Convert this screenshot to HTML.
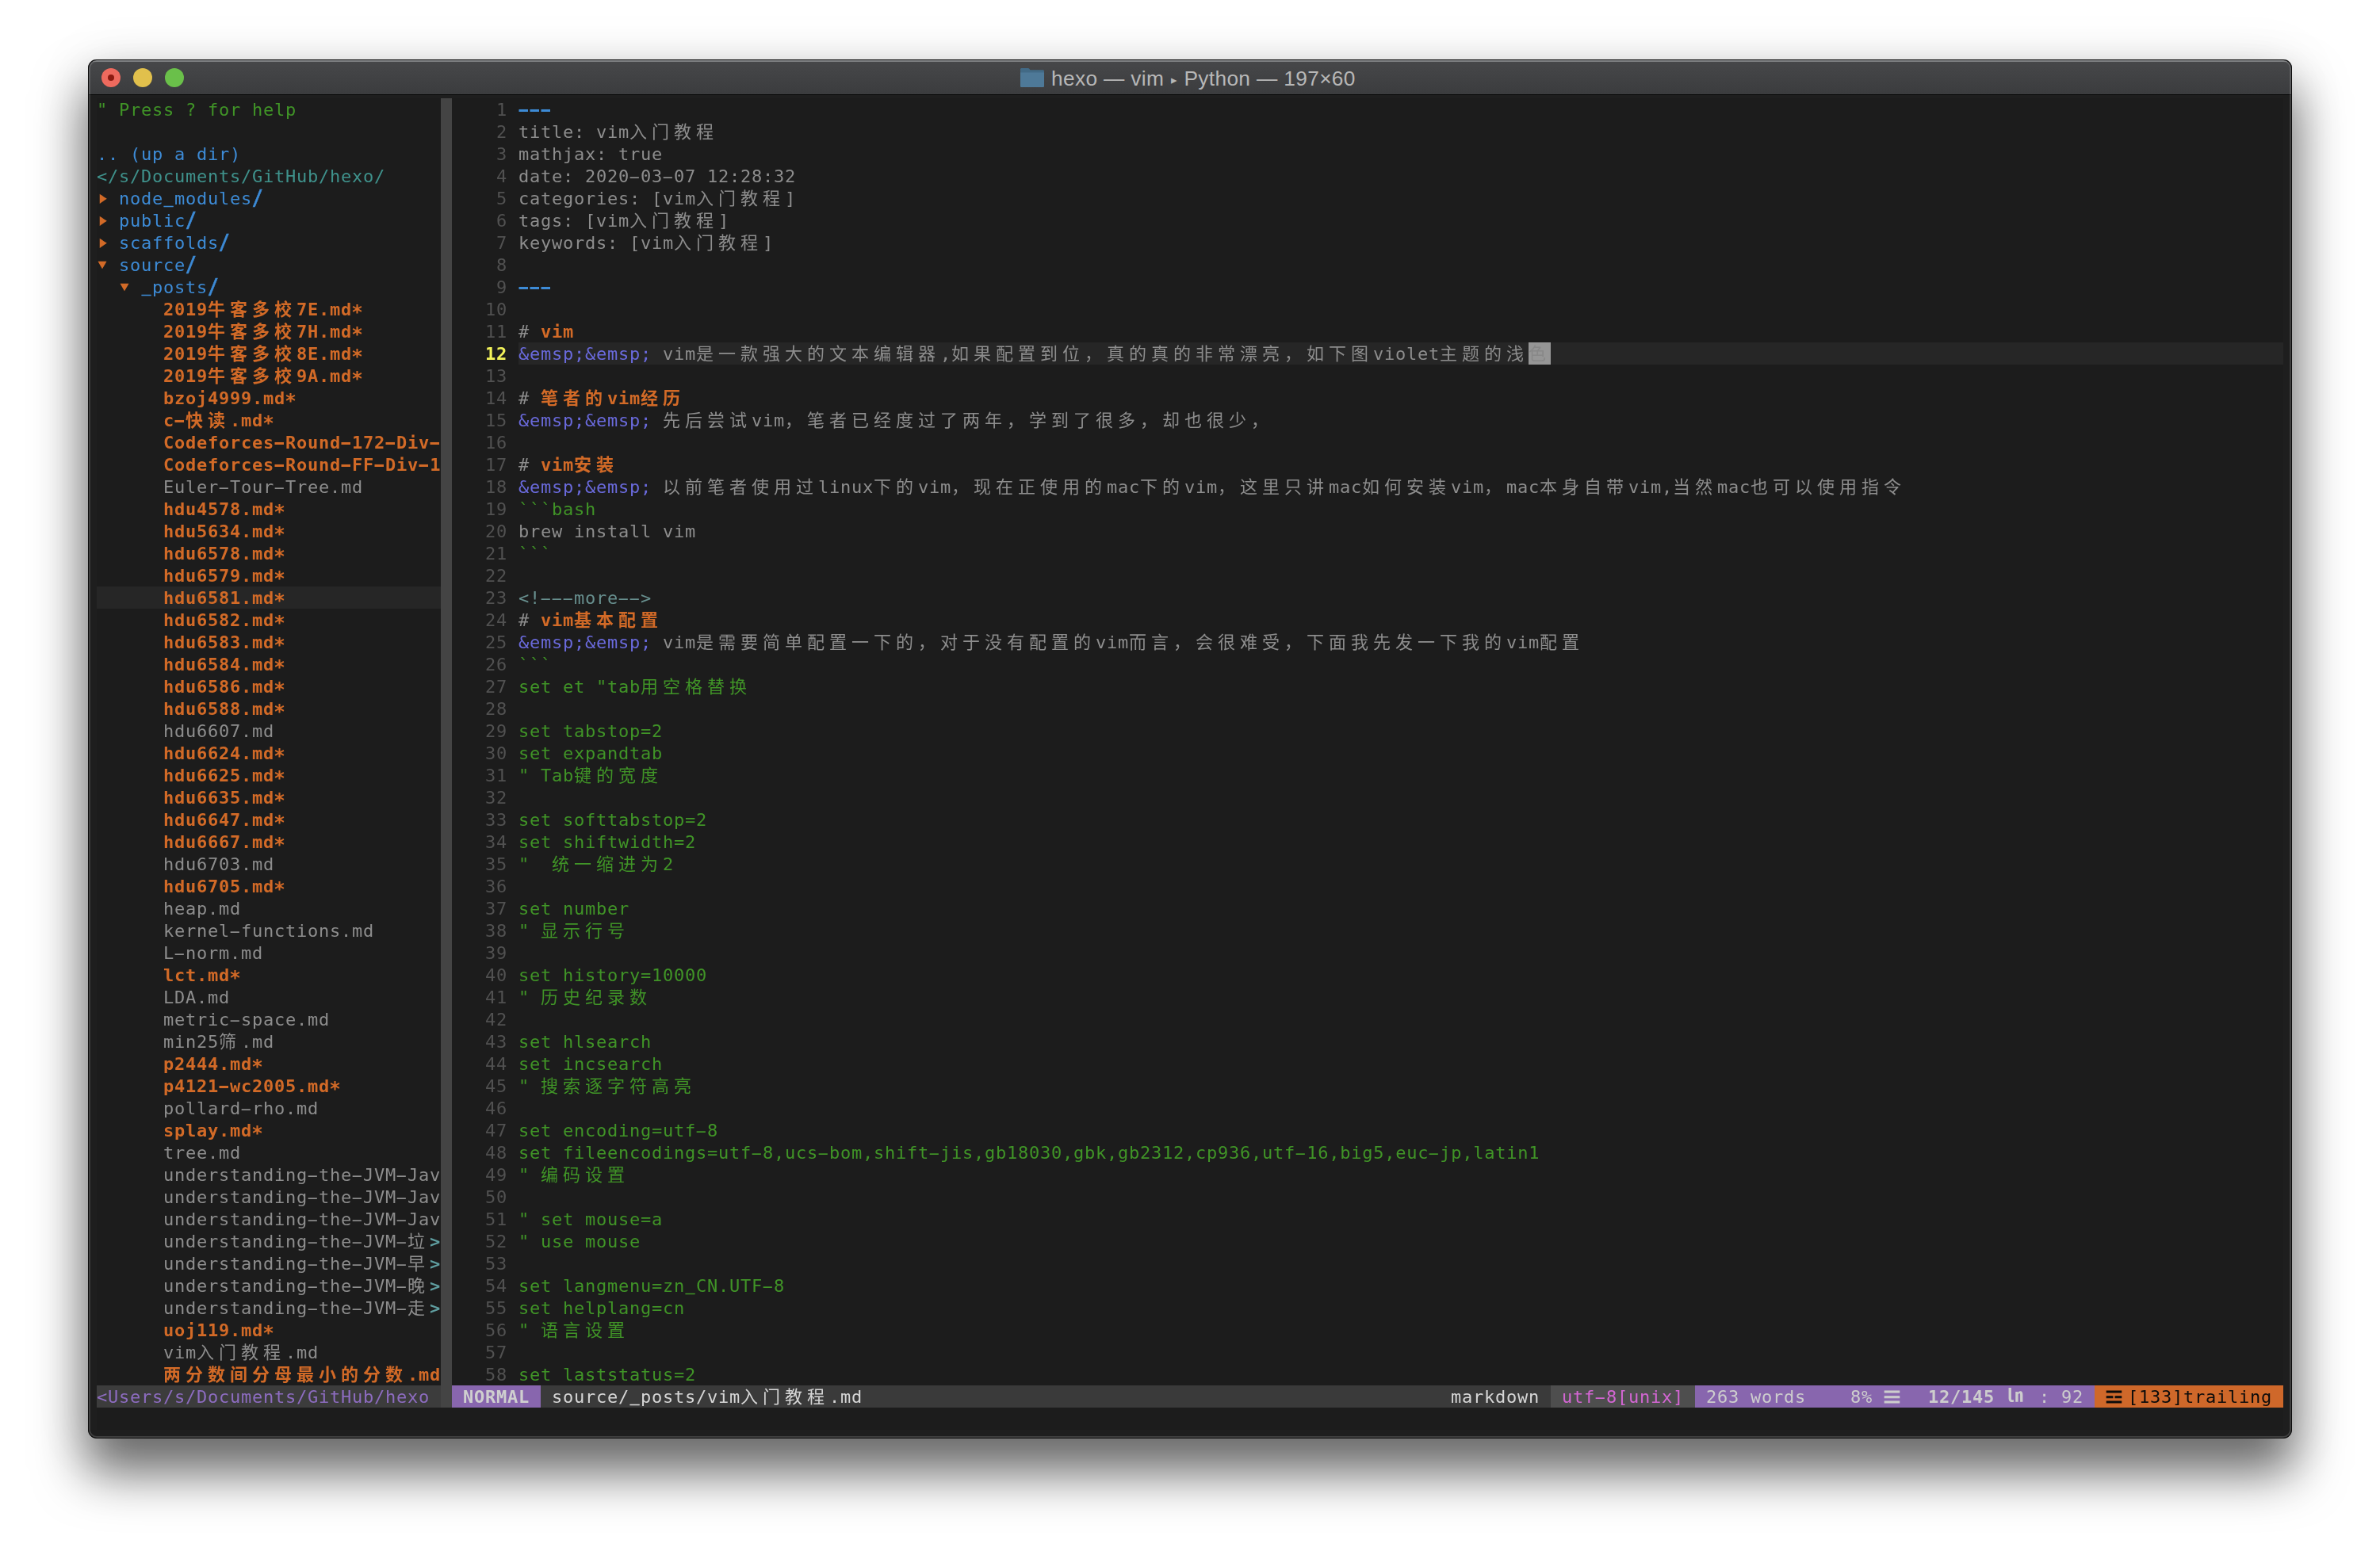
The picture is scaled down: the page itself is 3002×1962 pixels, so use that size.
<!DOCTYPE html>
<html lang="zh"><head><meta charset="utf-8"><title>hexo — vim ▸ Python — 197×60</title>
<style>
html,body{margin:0;padding:0}
body{width:3002px;height:1962px;background:#fff;position:relative;overflow:hidden}
#win{position:absolute;left:111px;top:75px;width:2780px;height:1740px;border-radius:11px;background:#1e1e1e;
 box-shadow:0 40px 63px 4px rgba(0,0,0,.57),0 6px 70px 4px rgba(0,0,0,.08);overflow:hidden}
#tb{position:absolute;left:0;top:0;right:0;height:44px;background:linear-gradient(#47484a,#3b3c3e);border-bottom:1px solid #050505;box-shadow:inset 0 3px 0 #6c6e70}
#edge{position:absolute;left:0;top:0;right:0;bottom:0;border-radius:11px;box-shadow:inset 0 0 0 1px #0a0a0a,inset 0 0 0 3px rgba(255,255,255,.15);pointer-events:none}
.tl{position:absolute;top:11px;width:24px;height:24px;border-radius:50%}
#ttl{position:absolute;top:0;left:1215px;height:44px;font-family:"Liberation Sans",sans-serif;font-size:26.3px;line-height:48px;letter-spacing:.34px;color:#b7b7b7;white-space:pre}
#ttl span{font-family:"DejaVu Sans",sans-serif;font-size:15px;position:relative;top:-2px;margin:0 1px}
#grid{will-change:transform;background:#1c1c1c;position:absolute;left:11px;top:49px;width:2758px;height:1680px}
.t{position:absolute;margin-top:1px;height:28px;line-height:28px;white-space:pre;font-family:"DejaVu Sans Mono","Liberation Mono","Noto Sans CJK SC",monospace;font-size:22px;letter-spacing:0.755px}
.k{margin-top:-2px;font-family:"Noto Sans CJK SC","DejaVu Sans Mono",sans-serif;letter-spacing:0;width:28px;font-size:22px}
.b{position:absolute;height:28px;display:block}
.bd{font-weight:bold}
.hy,.as,.us{font-style:normal;display:inline-block}.us{transform:translateY(-2px) scaleX(.88);-webkit-text-stroke:.6px currentColor}.hy{transform:scaleX(2)}.bd .hy{transform:scaleX(1.7)}.as{transform:translateY(3px) scale(1.1)}
.sl{transform:scale(1.05,1.18);-webkit-text-stroke:.5px currentColor}
.grn{color:#409427}.blu{color:#3d8bd6}.teal{color:#3f928c}.org{color:#d26a27}.gry{color:#8d8d8d}
.ntx{color:#5f9ea0}.pur{color:#6a6adc}.cmt{color:#68908f}.lnr{color:#515151}.cln{color:#f2f25a}
.cul{background:#262626}.vsp{background:#444}.cur{background:#969696}.curt{color:#888}
.st0{background:#3c3c3c}.st1{background:#3a3a3a}.st2{background:#4e4e4e}.stn{background:#8866ae}.sto{background:#cf682a}
.stp{color:#8d6cc0}.stnt{color:#cfcfcf}.stw{color:#d6d6d6}.stm{color:#d366d3}.stl{color:#cdcdcd}.stk{color:#0c0c0c}
.sym{font-family:"DejaVu Sans",sans-serif;letter-spacing:0;font-size:25px;margin-left:-1px;transform:scaleY(.82);-webkit-text-stroke:1.3px currentColor}
.ln{font-family:"Noto Sans CJK SC",sans-serif;letter-spacing:0;font-size:22px;margin-top:-4px;margin-left:1px}
.arr{font-size:27px;letter-spacing:0;margin-top:-1px;transform:scale(.86,1.16);transform-origin:50% 50%}
.ard{transform:scale(1.05,.92);margin-left:-1.5px}
</style></head>
<body>
<div id="win">
<div id="tb">
<i class="tl" style="left:17px;background:#ee6a5e"></i><i class="tl" style="width:8px;height:8px;top:19px;left:25px;background:#8c1a10"></i>
<i class="tl" style="left:57px;background:#e1c04c"></i>
<i class="tl" style="left:97px;background:#6ac04a"></i>
<svg style="position:absolute;left:1176px;top:11px" width="30" height="24" viewBox="0 0 30 24"><path d="M1.5 0h8.2c.8 0 1.3.3 1.8.9l1 1.3h16c.8 0 1.5.7 1.5 1.5V22.5c0 .8-.7 1.5-1.5 1.5H1.5C.7 24 0 23.300 0 22.500V1.500C0 .7.7 0 1.500 0z" fill="#426a86"/><path d="M0 5.500h30V22.500c0 .8-.7 1.500-1.500 1.500H1.500C.7 24 0 23.300 0 22.500z" fill="#4e7998"/></svg>
<div id="ttl">hexo — vim <span>▸</span> Python — 197×60</div>
</div>
<div id="grid">
<span class="t grn" style="left:0px;top:0px">&quot; Press ? for help</span>
<span class="t blu" style="left:0px;top:56px">.. (up a dir)</span>
<span class="t teal" style="left:0px;top:84px">&lt;/s/Documents/GitHub/hexo/</span>
<span class="t org arr" style="left:0px;top:112px">▸</span>
<span class="t blu" style="left:28px;top:112px">node<i class="us">_</i>modules</span>
<span class="t blu bd sl" style="left:196px;top:112px">/</span>
<span class="t org arr" style="left:0px;top:140px">▸</span>
<span class="t blu" style="left:28px;top:140px">public</span>
<span class="t blu bd sl" style="left:112px;top:140px">/</span>
<span class="t org arr" style="left:0px;top:168px">▸</span>
<span class="t blu" style="left:28px;top:168px">scaffolds</span>
<span class="t blu bd sl" style="left:154px;top:168px">/</span>
<span class="t org arr ard" style="left:0px;top:196px">▾</span>
<span class="t blu" style="left:28px;top:196px">source</span>
<span class="t blu bd sl" style="left:112px;top:196px">/</span>
<span class="t org arr ard" style="left:28px;top:224px">▾</span>
<span class="t blu" style="left:56px;top:224px"><i class="us">_</i>posts</span>
<span class="t blu bd sl" style="left:140px;top:224px">/</span>
<span class="t org bd" style="left:84px;top:252px">2019</span>
<span class="t k org bd" style="left:140px;top:252px">牛</span>
<span class="t k org bd" style="left:168px;top:252px">客</span>
<span class="t k org bd" style="left:196px;top:252px">多</span>
<span class="t k org bd" style="left:224px;top:252px">校</span>
<span class="t org bd" style="left:252px;top:252px">7E.md<i class="as">*</i></span>
<span class="t org bd" style="left:84px;top:280px">2019</span>
<span class="t k org bd" style="left:140px;top:280px">牛</span>
<span class="t k org bd" style="left:168px;top:280px">客</span>
<span class="t k org bd" style="left:196px;top:280px">多</span>
<span class="t k org bd" style="left:224px;top:280px">校</span>
<span class="t org bd" style="left:252px;top:280px">7H.md<i class="as">*</i></span>
<span class="t org bd" style="left:84px;top:308px">2019</span>
<span class="t k org bd" style="left:140px;top:308px">牛</span>
<span class="t k org bd" style="left:168px;top:308px">客</span>
<span class="t k org bd" style="left:196px;top:308px">多</span>
<span class="t k org bd" style="left:224px;top:308px">校</span>
<span class="t org bd" style="left:252px;top:308px">8E.md<i class="as">*</i></span>
<span class="t org bd" style="left:84px;top:336px">2019</span>
<span class="t k org bd" style="left:140px;top:336px">牛</span>
<span class="t k org bd" style="left:168px;top:336px">客</span>
<span class="t k org bd" style="left:196px;top:336px">多</span>
<span class="t k org bd" style="left:224px;top:336px">校</span>
<span class="t org bd" style="left:252px;top:336px">9A.md<i class="as">*</i></span>
<span class="t org bd" style="left:84px;top:364px">bzoj4999.md<i class="as">*</i></span>
<span class="t org bd" style="left:84px;top:392px">c<i class="hy">-</i></span>
<span class="t k org bd" style="left:112px;top:392px">快</span>
<span class="t k org bd" style="left:140px;top:392px">读</span>
<span class="t org bd" style="left:168px;top:392px">.md<i class="as">*</i></span>
<span class="t org bd" style="left:84px;top:420px">Codeforces<i class="hy">-</i>Round<i class="hy">-</i>172<i class="hy">-</i>Div<i class="hy">-</i></span>
<span class="t org bd" style="left:84px;top:448px">Codeforces<i class="hy">-</i>Round<i class="hy">-</i>FF<i class="hy">-</i>Div<i class="hy">-</i>1</span>
<span class="t gry" style="left:84px;top:476px">Euler<i class="hy">-</i>Tour<i class="hy">-</i>Tree.md</span>
<span class="t org bd" style="left:84px;top:504px">hdu4578.md<i class="as">*</i></span>
<span class="t org bd" style="left:84px;top:532px">hdu5634.md<i class="as">*</i></span>
<span class="t org bd" style="left:84px;top:560px">hdu6578.md<i class="as">*</i></span>
<span class="t org bd" style="left:84px;top:588px">hdu6579.md<i class="as">*</i></span>
<i class="b cul" style="left:0px;top:616px;width:434px"></i>
<span class="t org bd" style="left:84px;top:616px">hdu6581.md<i class="as">*</i></span>
<span class="t org bd" style="left:84px;top:644px">hdu6582.md<i class="as">*</i></span>
<span class="t org bd" style="left:84px;top:672px">hdu6583.md<i class="as">*</i></span>
<span class="t org bd" style="left:84px;top:700px">hdu6584.md<i class="as">*</i></span>
<span class="t org bd" style="left:84px;top:728px">hdu6586.md<i class="as">*</i></span>
<span class="t org bd" style="left:84px;top:756px">hdu6588.md<i class="as">*</i></span>
<span class="t gry" style="left:84px;top:784px">hdu6607.md</span>
<span class="t org bd" style="left:84px;top:812px">hdu6624.md<i class="as">*</i></span>
<span class="t org bd" style="left:84px;top:840px">hdu6625.md<i class="as">*</i></span>
<span class="t org bd" style="left:84px;top:868px">hdu6635.md<i class="as">*</i></span>
<span class="t org bd" style="left:84px;top:896px">hdu6647.md<i class="as">*</i></span>
<span class="t org bd" style="left:84px;top:924px">hdu6667.md<i class="as">*</i></span>
<span class="t gry" style="left:84px;top:952px">hdu6703.md</span>
<span class="t org bd" style="left:84px;top:980px">hdu6705.md<i class="as">*</i></span>
<span class="t gry" style="left:84px;top:1008px">heap.md</span>
<span class="t gry" style="left:84px;top:1036px">kernel<i class="hy">-</i>functions.md</span>
<span class="t gry" style="left:84px;top:1064px">L<i class="hy">-</i>norm.md</span>
<span class="t org bd" style="left:84px;top:1092px">lct.md<i class="as">*</i></span>
<span class="t gry" style="left:84px;top:1120px">LDA.md</span>
<span class="t gry" style="left:84px;top:1148px">metric<i class="hy">-</i>space.md</span>
<span class="t gry" style="left:84px;top:1176px">min25</span>
<span class="t k gry" style="left:154px;top:1176px">筛</span>
<span class="t gry" style="left:182px;top:1176px">.md</span>
<span class="t org bd" style="left:84px;top:1204px">p2444.md<i class="as">*</i></span>
<span class="t org bd" style="left:84px;top:1232px">p4121<i class="hy">-</i>wc2005.md<i class="as">*</i></span>
<span class="t gry" style="left:84px;top:1260px">pollard<i class="hy">-</i>rho.md</span>
<span class="t org bd" style="left:84px;top:1288px">splay.md<i class="as">*</i></span>
<span class="t gry" style="left:84px;top:1316px">tree.md</span>
<span class="t gry" style="left:84px;top:1344px">understanding<i class="hy">-</i>the<i class="hy">-</i>JVM<i class="hy">-</i>Jav</span>
<span class="t gry" style="left:84px;top:1372px">understanding<i class="hy">-</i>the<i class="hy">-</i>JVM<i class="hy">-</i>Jav</span>
<span class="t gry" style="left:84px;top:1400px">understanding<i class="hy">-</i>the<i class="hy">-</i>JVM<i class="hy">-</i>Jav</span>
<span class="t gry" style="left:84px;top:1428px">understanding<i class="hy">-</i>the<i class="hy">-</i>JVM<i class="hy">-</i></span>
<span class="t k gry" style="left:392px;top:1428px">垃</span>
<span class="t ntx bd" style="left:420px;top:1428px">&gt;</span>
<span class="t gry" style="left:84px;top:1456px">understanding<i class="hy">-</i>the<i class="hy">-</i>JVM<i class="hy">-</i></span>
<span class="t k gry" style="left:392px;top:1456px">早</span>
<span class="t ntx bd" style="left:420px;top:1456px">&gt;</span>
<span class="t gry" style="left:84px;top:1484px">understanding<i class="hy">-</i>the<i class="hy">-</i>JVM<i class="hy">-</i></span>
<span class="t k gry" style="left:392px;top:1484px">晚</span>
<span class="t ntx bd" style="left:420px;top:1484px">&gt;</span>
<span class="t gry" style="left:84px;top:1512px">understanding<i class="hy">-</i>the<i class="hy">-</i>JVM<i class="hy">-</i></span>
<span class="t k gry" style="left:392px;top:1512px">走</span>
<span class="t ntx bd" style="left:420px;top:1512px">&gt;</span>
<span class="t org bd" style="left:84px;top:1540px">uoj119.md<i class="as">*</i></span>
<span class="t gry" style="left:84px;top:1568px">vim</span>
<span class="t k gry" style="left:126px;top:1568px">入</span>
<span class="t k gry" style="left:154px;top:1568px">门</span>
<span class="t k gry" style="left:182px;top:1568px">教</span>
<span class="t k gry" style="left:210px;top:1568px">程</span>
<span class="t gry" style="left:238px;top:1568px">.md</span>
<span class="t k org bd" style="left:84px;top:1596px">两</span>
<span class="t k org bd" style="left:112px;top:1596px">分</span>
<span class="t k org bd" style="left:140px;top:1596px">数</span>
<span class="t k org bd" style="left:168px;top:1596px">间</span>
<span class="t k org bd" style="left:196px;top:1596px">分</span>
<span class="t k org bd" style="left:224px;top:1596px">母</span>
<span class="t k org bd" style="left:252px;top:1596px">最</span>
<span class="t k org bd" style="left:280px;top:1596px">小</span>
<span class="t k org bd" style="left:308px;top:1596px">的</span>
<span class="t k org bd" style="left:336px;top:1596px">分</span>
<span class="t k org bd" style="left:364px;top:1596px">数</span>
<span class="t org bd" style="left:392px;top:1596px">.md</span>
<i class="b vsp" style="left:434px;top:0;width:14px;height:1624px"></i>
<i class="b cul" style="left:532px;top:308px;width:2226px"></i>
<span class="t lnr" style="left:504px;top:0px">1</span>
<span class="t blu bd" style="left:532px;top:0px"><i class="hy">-</i><i class="hy">-</i><i class="hy">-</i></span>
<span class="t lnr" style="left:504px;top:28px">2</span>
<span class="t gry" style="left:532px;top:28px">title: vim</span>
<span class="t k gry" style="left:672px;top:28px">入</span>
<span class="t k gry" style="left:700px;top:28px">门</span>
<span class="t k gry" style="left:728px;top:28px">教</span>
<span class="t k gry" style="left:756px;top:28px">程</span>
<span class="t lnr" style="left:504px;top:56px">3</span>
<span class="t gry" style="left:532px;top:56px">mathjax: true</span>
<span class="t lnr" style="left:504px;top:84px">4</span>
<span class="t gry" style="left:532px;top:84px">date: 2020<i class="hy">-</i>03<i class="hy">-</i>07 12:28:32</span>
<span class="t lnr" style="left:504px;top:112px">5</span>
<span class="t gry" style="left:532px;top:112px">categories: [vim</span>
<span class="t k gry" style="left:756px;top:112px">入</span>
<span class="t k gry" style="left:784px;top:112px">门</span>
<span class="t k gry" style="left:812px;top:112px">教</span>
<span class="t k gry" style="left:840px;top:112px">程</span>
<span class="t gry" style="left:868px;top:112px">]</span>
<span class="t lnr" style="left:504px;top:140px">6</span>
<span class="t gry" style="left:532px;top:140px">tags: [vim</span>
<span class="t k gry" style="left:672px;top:140px">入</span>
<span class="t k gry" style="left:700px;top:140px">门</span>
<span class="t k gry" style="left:728px;top:140px">教</span>
<span class="t k gry" style="left:756px;top:140px">程</span>
<span class="t gry" style="left:784px;top:140px">]</span>
<span class="t lnr" style="left:504px;top:168px">7</span>
<span class="t gry" style="left:532px;top:168px">keywords: [vim</span>
<span class="t k gry" style="left:728px;top:168px">入</span>
<span class="t k gry" style="left:756px;top:168px">门</span>
<span class="t k gry" style="left:784px;top:168px">教</span>
<span class="t k gry" style="left:812px;top:168px">程</span>
<span class="t gry" style="left:840px;top:168px">]</span>
<span class="t lnr" style="left:504px;top:196px">8</span>
<span class="t lnr" style="left:504px;top:224px">9</span>
<span class="t blu bd" style="left:532px;top:224px"><i class="hy">-</i><i class="hy">-</i><i class="hy">-</i></span>
<span class="t lnr" style="left:490px;top:252px">10</span>
<span class="t lnr" style="left:490px;top:280px">11</span>
<span class="t gry" style="left:532px;top:280px">#</span>
<span class="t org bd" style="left:560px;top:280px">vim</span>
<span class="t cln bd" style="left:490px;top:308px">12</span>
<span class="t pur" style="left:532px;top:308px">&amp;emsp;&amp;emsp;</span>
<span class="t gry" style="left:714px;top:308px">vim</span>
<span class="t k gry" style="left:756px;top:308px">是</span>
<span class="t k gry" style="left:784px;top:308px">一</span>
<span class="t k gry" style="left:812px;top:308px">款</span>
<span class="t k gry" style="left:840px;top:308px">强</span>
<span class="t k gry" style="left:868px;top:308px">大</span>
<span class="t k gry" style="left:896px;top:308px">的</span>
<span class="t k gry" style="left:924px;top:308px">文</span>
<span class="t k gry" style="left:952px;top:308px">本</span>
<span class="t k gry" style="left:980px;top:308px">编</span>
<span class="t k gry" style="left:1008px;top:308px">辑</span>
<span class="t k gry" style="left:1036px;top:308px">器</span>
<span class="t gry" style="left:1064px;top:308px">,</span>
<span class="t k gry" style="left:1078px;top:308px">如</span>
<span class="t k gry" style="left:1106px;top:308px">果</span>
<span class="t k gry" style="left:1134px;top:308px">配</span>
<span class="t k gry" style="left:1162px;top:308px">置</span>
<span class="t k gry" style="left:1190px;top:308px">到</span>
<span class="t k gry" style="left:1218px;top:308px">位</span>
<span class="t k gry" style="left:1246px;top:308px">，</span>
<span class="t k gry" style="left:1274px;top:308px">真</span>
<span class="t k gry" style="left:1302px;top:308px">的</span>
<span class="t k gry" style="left:1330px;top:308px">真</span>
<span class="t k gry" style="left:1358px;top:308px">的</span>
<span class="t k gry" style="left:1386px;top:308px">非</span>
<span class="t k gry" style="left:1414px;top:308px">常</span>
<span class="t k gry" style="left:1442px;top:308px">漂</span>
<span class="t k gry" style="left:1470px;top:308px">亮</span>
<span class="t k gry" style="left:1498px;top:308px">，</span>
<span class="t k gry" style="left:1526px;top:308px">如</span>
<span class="t k gry" style="left:1554px;top:308px">下</span>
<span class="t k gry" style="left:1582px;top:308px">图</span>
<span class="t gry" style="left:1610px;top:308px">violet</span>
<span class="t k gry" style="left:1694px;top:308px">主</span>
<span class="t k gry" style="left:1722px;top:308px">题</span>
<span class="t k gry" style="left:1750px;top:308px">的</span>
<span class="t k gry" style="left:1778px;top:308px">浅</span>
<i class="b cur" style="left:1806px;top:308px;width:28px"></i>
<span class="t k curt" style="left:1806px;top:308px">色</span>
<span class="t lnr" style="left:490px;top:336px">13</span>
<span class="t lnr" style="left:490px;top:364px">14</span>
<span class="t gry" style="left:532px;top:364px">#</span>
<span class="t k org bd" style="left:560px;top:364px">笔</span>
<span class="t k org bd" style="left:588px;top:364px">者</span>
<span class="t k org bd" style="left:616px;top:364px">的</span>
<span class="t org bd" style="left:644px;top:364px">vim</span>
<span class="t k org bd" style="left:686px;top:364px">经</span>
<span class="t k org bd" style="left:714px;top:364px">历</span>
<span class="t lnr" style="left:490px;top:392px">15</span>
<span class="t pur" style="left:532px;top:392px">&amp;emsp;&amp;emsp;</span>
<span class="t k gry" style="left:714px;top:392px">先</span>
<span class="t k gry" style="left:742px;top:392px">后</span>
<span class="t k gry" style="left:770px;top:392px">尝</span>
<span class="t k gry" style="left:798px;top:392px">试</span>
<span class="t gry" style="left:826px;top:392px">vim</span>
<span class="t k gry" style="left:868px;top:392px">，</span>
<span class="t k gry" style="left:896px;top:392px">笔</span>
<span class="t k gry" style="left:924px;top:392px">者</span>
<span class="t k gry" style="left:952px;top:392px">已</span>
<span class="t k gry" style="left:980px;top:392px">经</span>
<span class="t k gry" style="left:1008px;top:392px">度</span>
<span class="t k gry" style="left:1036px;top:392px">过</span>
<span class="t k gry" style="left:1064px;top:392px">了</span>
<span class="t k gry" style="left:1092px;top:392px">两</span>
<span class="t k gry" style="left:1120px;top:392px">年</span>
<span class="t k gry" style="left:1148px;top:392px">，</span>
<span class="t k gry" style="left:1176px;top:392px">学</span>
<span class="t k gry" style="left:1204px;top:392px">到</span>
<span class="t k gry" style="left:1232px;top:392px">了</span>
<span class="t k gry" style="left:1260px;top:392px">很</span>
<span class="t k gry" style="left:1288px;top:392px">多</span>
<span class="t k gry" style="left:1316px;top:392px">，</span>
<span class="t k gry" style="left:1344px;top:392px">却</span>
<span class="t k gry" style="left:1372px;top:392px">也</span>
<span class="t k gry" style="left:1400px;top:392px">很</span>
<span class="t k gry" style="left:1428px;top:392px">少</span>
<span class="t k gry" style="left:1456px;top:392px">，</span>
<span class="t lnr" style="left:490px;top:420px">16</span>
<span class="t lnr" style="left:490px;top:448px">17</span>
<span class="t gry" style="left:532px;top:448px">#</span>
<span class="t org bd" style="left:560px;top:448px">vim</span>
<span class="t k org bd" style="left:602px;top:448px">安</span>
<span class="t k org bd" style="left:630px;top:448px">装</span>
<span class="t lnr" style="left:490px;top:476px">18</span>
<span class="t pur" style="left:532px;top:476px">&amp;emsp;&amp;emsp;</span>
<span class="t k gry" style="left:714px;top:476px">以</span>
<span class="t k gry" style="left:742px;top:476px">前</span>
<span class="t k gry" style="left:770px;top:476px">笔</span>
<span class="t k gry" style="left:798px;top:476px">者</span>
<span class="t k gry" style="left:826px;top:476px">使</span>
<span class="t k gry" style="left:854px;top:476px">用</span>
<span class="t k gry" style="left:882px;top:476px">过</span>
<span class="t gry" style="left:910px;top:476px">linux</span>
<span class="t k gry" style="left:980px;top:476px">下</span>
<span class="t k gry" style="left:1008px;top:476px">的</span>
<span class="t gry" style="left:1036px;top:476px">vim</span>
<span class="t k gry" style="left:1078px;top:476px">，</span>
<span class="t k gry" style="left:1106px;top:476px">现</span>
<span class="t k gry" style="left:1134px;top:476px">在</span>
<span class="t k gry" style="left:1162px;top:476px">正</span>
<span class="t k gry" style="left:1190px;top:476px">使</span>
<span class="t k gry" style="left:1218px;top:476px">用</span>
<span class="t k gry" style="left:1246px;top:476px">的</span>
<span class="t gry" style="left:1274px;top:476px">mac</span>
<span class="t k gry" style="left:1316px;top:476px">下</span>
<span class="t k gry" style="left:1344px;top:476px">的</span>
<span class="t gry" style="left:1372px;top:476px">vim</span>
<span class="t k gry" style="left:1414px;top:476px">，</span>
<span class="t k gry" style="left:1442px;top:476px">这</span>
<span class="t k gry" style="left:1470px;top:476px">里</span>
<span class="t k gry" style="left:1498px;top:476px">只</span>
<span class="t k gry" style="left:1526px;top:476px">讲</span>
<span class="t gry" style="left:1554px;top:476px">mac</span>
<span class="t k gry" style="left:1596px;top:476px">如</span>
<span class="t k gry" style="left:1624px;top:476px">何</span>
<span class="t k gry" style="left:1652px;top:476px">安</span>
<span class="t k gry" style="left:1680px;top:476px">装</span>
<span class="t gry" style="left:1708px;top:476px">vim</span>
<span class="t k gry" style="left:1750px;top:476px">，</span>
<span class="t gry" style="left:1778px;top:476px">mac</span>
<span class="t k gry" style="left:1820px;top:476px">本</span>
<span class="t k gry" style="left:1848px;top:476px">身</span>
<span class="t k gry" style="left:1876px;top:476px">自</span>
<span class="t k gry" style="left:1904px;top:476px">带</span>
<span class="t gry" style="left:1932px;top:476px">vim,</span>
<span class="t k gry" style="left:1988px;top:476px">当</span>
<span class="t k gry" style="left:2016px;top:476px">然</span>
<span class="t gry" style="left:2044px;top:476px">mac</span>
<span class="t k gry" style="left:2086px;top:476px">也</span>
<span class="t k gry" style="left:2114px;top:476px">可</span>
<span class="t k gry" style="left:2142px;top:476px">以</span>
<span class="t k gry" style="left:2170px;top:476px">使</span>
<span class="t k gry" style="left:2198px;top:476px">用</span>
<span class="t k gry" style="left:2226px;top:476px">指</span>
<span class="t k gry" style="left:2254px;top:476px">令</span>
<span class="t lnr" style="left:490px;top:504px">19</span>
<span class="t grn" style="left:532px;top:504px">```bash</span>
<span class="t lnr" style="left:490px;top:532px">20</span>
<span class="t gry" style="left:532px;top:532px">brew install vim</span>
<span class="t lnr" style="left:490px;top:560px">21</span>
<span class="t grn" style="left:532px;top:560px">```</span>
<span class="t lnr" style="left:490px;top:588px">22</span>
<span class="t lnr" style="left:490px;top:616px">23</span>
<span class="t cmt" style="left:532px;top:616px">&lt;!<i class="hy">-</i><i class="hy">-</i><i class="hy">-</i>more<i class="hy">-</i><i class="hy">-</i>&gt;</span>
<span class="t lnr" style="left:490px;top:644px">24</span>
<span class="t gry" style="left:532px;top:644px">#</span>
<span class="t org bd" style="left:560px;top:644px">vim</span>
<span class="t k org bd" style="left:602px;top:644px">基</span>
<span class="t k org bd" style="left:630px;top:644px">本</span>
<span class="t k org bd" style="left:658px;top:644px">配</span>
<span class="t k org bd" style="left:686px;top:644px">置</span>
<span class="t lnr" style="left:490px;top:672px">25</span>
<span class="t pur" style="left:532px;top:672px">&amp;emsp;&amp;emsp;</span>
<span class="t gry" style="left:714px;top:672px">vim</span>
<span class="t k gry" style="left:756px;top:672px">是</span>
<span class="t k gry" style="left:784px;top:672px">需</span>
<span class="t k gry" style="left:812px;top:672px">要</span>
<span class="t k gry" style="left:840px;top:672px">简</span>
<span class="t k gry" style="left:868px;top:672px">单</span>
<span class="t k gry" style="left:896px;top:672px">配</span>
<span class="t k gry" style="left:924px;top:672px">置</span>
<span class="t k gry" style="left:952px;top:672px">一</span>
<span class="t k gry" style="left:980px;top:672px">下</span>
<span class="t k gry" style="left:1008px;top:672px">的</span>
<span class="t k gry" style="left:1036px;top:672px">，</span>
<span class="t k gry" style="left:1064px;top:672px">对</span>
<span class="t k gry" style="left:1092px;top:672px">于</span>
<span class="t k gry" style="left:1120px;top:672px">没</span>
<span class="t k gry" style="left:1148px;top:672px">有</span>
<span class="t k gry" style="left:1176px;top:672px">配</span>
<span class="t k gry" style="left:1204px;top:672px">置</span>
<span class="t k gry" style="left:1232px;top:672px">的</span>
<span class="t gry" style="left:1260px;top:672px">vim</span>
<span class="t k gry" style="left:1302px;top:672px">而</span>
<span class="t k gry" style="left:1330px;top:672px">言</span>
<span class="t k gry" style="left:1358px;top:672px">，</span>
<span class="t k gry" style="left:1386px;top:672px">会</span>
<span class="t k gry" style="left:1414px;top:672px">很</span>
<span class="t k gry" style="left:1442px;top:672px">难</span>
<span class="t k gry" style="left:1470px;top:672px">受</span>
<span class="t k gry" style="left:1498px;top:672px">，</span>
<span class="t k gry" style="left:1526px;top:672px">下</span>
<span class="t k gry" style="left:1554px;top:672px">面</span>
<span class="t k gry" style="left:1582px;top:672px">我</span>
<span class="t k gry" style="left:1610px;top:672px">先</span>
<span class="t k gry" style="left:1638px;top:672px">发</span>
<span class="t k gry" style="left:1666px;top:672px">一</span>
<span class="t k gry" style="left:1694px;top:672px">下</span>
<span class="t k gry" style="left:1722px;top:672px">我</span>
<span class="t k gry" style="left:1750px;top:672px">的</span>
<span class="t gry" style="left:1778px;top:672px">vim</span>
<span class="t k gry" style="left:1820px;top:672px">配</span>
<span class="t k gry" style="left:1848px;top:672px">置</span>
<span class="t lnr" style="left:490px;top:700px">26</span>
<span class="t grn" style="left:532px;top:700px">```</span>
<span class="t lnr" style="left:490px;top:728px">27</span>
<span class="t grn" style="left:532px;top:728px">set et &quot;tab</span>
<span class="t k grn" style="left:686px;top:728px">用</span>
<span class="t k grn" style="left:714px;top:728px">空</span>
<span class="t k grn" style="left:742px;top:728px">格</span>
<span class="t k grn" style="left:770px;top:728px">替</span>
<span class="t k grn" style="left:798px;top:728px">换</span>
<span class="t lnr" style="left:490px;top:756px">28</span>
<span class="t lnr" style="left:490px;top:784px">29</span>
<span class="t grn" style="left:532px;top:784px">set tabstop=2</span>
<span class="t lnr" style="left:490px;top:812px">30</span>
<span class="t grn" style="left:532px;top:812px">set expandtab</span>
<span class="t lnr" style="left:490px;top:840px">31</span>
<span class="t grn" style="left:532px;top:840px">&quot; Tab</span>
<span class="t k grn" style="left:602px;top:840px">键</span>
<span class="t k grn" style="left:630px;top:840px">的</span>
<span class="t k grn" style="left:658px;top:840px">宽</span>
<span class="t k grn" style="left:686px;top:840px">度</span>
<span class="t lnr" style="left:490px;top:868px">32</span>
<span class="t lnr" style="left:490px;top:896px">33</span>
<span class="t grn" style="left:532px;top:896px">set softtabstop=2</span>
<span class="t lnr" style="left:490px;top:924px">34</span>
<span class="t grn" style="left:532px;top:924px">set shiftwidth=2</span>
<span class="t lnr" style="left:490px;top:952px">35</span>
<span class="t grn" style="left:532px;top:952px">&quot;</span>
<span class="t k grn" style="left:574px;top:952px">统</span>
<span class="t k grn" style="left:602px;top:952px">一</span>
<span class="t k grn" style="left:630px;top:952px">缩</span>
<span class="t k grn" style="left:658px;top:952px">进</span>
<span class="t k grn" style="left:686px;top:952px">为</span>
<span class="t grn" style="left:714px;top:952px">2</span>
<span class="t lnr" style="left:490px;top:980px">36</span>
<span class="t lnr" style="left:490px;top:1008px">37</span>
<span class="t grn" style="left:532px;top:1008px">set number</span>
<span class="t lnr" style="left:490px;top:1036px">38</span>
<span class="t grn" style="left:532px;top:1036px">&quot;</span>
<span class="t k grn" style="left:560px;top:1036px">显</span>
<span class="t k grn" style="left:588px;top:1036px">示</span>
<span class="t k grn" style="left:616px;top:1036px">行</span>
<span class="t k grn" style="left:644px;top:1036px">号</span>
<span class="t lnr" style="left:490px;top:1064px">39</span>
<span class="t lnr" style="left:490px;top:1092px">40</span>
<span class="t grn" style="left:532px;top:1092px">set history=10000</span>
<span class="t lnr" style="left:490px;top:1120px">41</span>
<span class="t grn" style="left:532px;top:1120px">&quot;</span>
<span class="t k grn" style="left:560px;top:1120px">历</span>
<span class="t k grn" style="left:588px;top:1120px">史</span>
<span class="t k grn" style="left:616px;top:1120px">纪</span>
<span class="t k grn" style="left:644px;top:1120px">录</span>
<span class="t k grn" style="left:672px;top:1120px">数</span>
<span class="t lnr" style="left:490px;top:1148px">42</span>
<span class="t lnr" style="left:490px;top:1176px">43</span>
<span class="t grn" style="left:532px;top:1176px">set hlsearch</span>
<span class="t lnr" style="left:490px;top:1204px">44</span>
<span class="t grn" style="left:532px;top:1204px">set incsearch</span>
<span class="t lnr" style="left:490px;top:1232px">45</span>
<span class="t grn" style="left:532px;top:1232px">&quot;</span>
<span class="t k grn" style="left:560px;top:1232px">搜</span>
<span class="t k grn" style="left:588px;top:1232px">索</span>
<span class="t k grn" style="left:616px;top:1232px">逐</span>
<span class="t k grn" style="left:644px;top:1232px">字</span>
<span class="t k grn" style="left:672px;top:1232px">符</span>
<span class="t k grn" style="left:700px;top:1232px">高</span>
<span class="t k grn" style="left:728px;top:1232px">亮</span>
<span class="t lnr" style="left:490px;top:1260px">46</span>
<span class="t lnr" style="left:490px;top:1288px">47</span>
<span class="t grn" style="left:532px;top:1288px">set encoding=utf<i class="hy">-</i>8</span>
<span class="t lnr" style="left:490px;top:1316px">48</span>
<span class="t grn" style="left:532px;top:1316px">set fileencodings=utf<i class="hy">-</i>8,ucs<i class="hy">-</i>bom,shift<i class="hy">-</i>jis,gb18030,gbk,gb2312,cp936,utf<i class="hy">-</i>16,big5,euc<i class="hy">-</i>jp,latin1</span>
<span class="t lnr" style="left:490px;top:1344px">49</span>
<span class="t grn" style="left:532px;top:1344px">&quot;</span>
<span class="t k grn" style="left:560px;top:1344px">编</span>
<span class="t k grn" style="left:588px;top:1344px">码</span>
<span class="t k grn" style="left:616px;top:1344px">设</span>
<span class="t k grn" style="left:644px;top:1344px">置</span>
<span class="t lnr" style="left:490px;top:1372px">50</span>
<span class="t lnr" style="left:490px;top:1400px">51</span>
<span class="t grn" style="left:532px;top:1400px">&quot; set mouse=a</span>
<span class="t lnr" style="left:490px;top:1428px">52</span>
<span class="t grn" style="left:532px;top:1428px">&quot; use mouse</span>
<span class="t lnr" style="left:490px;top:1456px">53</span>
<span class="t lnr" style="left:490px;top:1484px">54</span>
<span class="t grn" style="left:532px;top:1484px">set langmenu=zn<i class="us">_</i>CN.UTF<i class="hy">-</i>8</span>
<span class="t lnr" style="left:490px;top:1512px">55</span>
<span class="t grn" style="left:532px;top:1512px">set helplang=cn</span>
<span class="t lnr" style="left:490px;top:1540px">56</span>
<span class="t grn" style="left:532px;top:1540px">&quot;</span>
<span class="t k grn" style="left:560px;top:1540px">语</span>
<span class="t k grn" style="left:588px;top:1540px">言</span>
<span class="t k grn" style="left:616px;top:1540px">设</span>
<span class="t k grn" style="left:644px;top:1540px">置</span>
<span class="t lnr" style="left:490px;top:1568px">57</span>
<span class="t lnr" style="left:490px;top:1596px">58</span>
<span class="t grn" style="left:532px;top:1596px">set laststatus=2</span>
<i class="b st0" style="left:0px;top:1624px;width:434px"></i>
<span class="t stp" style="left:0px;top:1624px">&lt;Users/s/Documents/GitHub/hexo</span>
<i class="b vsp" style="left:434px;top:1624px;width:14px"></i>
<i class="b stn" style="left:448px;top:1624px;width:112px"></i>
<span class="t stnt bd" style="left:462px;top:1624px">NORMAL</span>
<i class="b st1" style="left:560px;top:1624px;width:1274px"></i>
<span class="t stw" style="left:574px;top:1624px">source/<i class="us">_</i>posts/vim</span>
<span class="t k stw" style="left:812px;top:1624px">入</span>
<span class="t k stw" style="left:840px;top:1624px">门</span>
<span class="t k stw" style="left:868px;top:1624px">教</span>
<span class="t k stw" style="left:896px;top:1624px">程</span>
<span class="t stw" style="left:924px;top:1624px">.md</span>
<span class="t stw" style="left:1708px;top:1624px">markdown</span>
<i class="b st2" style="left:1834px;top:1624px;width:182px"></i>
<span class="t stm" style="left:1848px;top:1624px">utf<i class="hy">-</i>8[unix]</span>
<i class="b stn" style="left:2016px;top:1624px;width:504px"></i>
<span class="t stl" style="left:2030px;top:1624px">263 words</span>
<span class="t stl" style="left:2212px;top:1624px">8%</span>
<span class="t stl sym" style="left:2254px;top:1624px">☰</span>
<span class="t stl bd" style="left:2310px;top:1624px">12/145</span>
<span class="t stl bd ln" style="left:2408px;top:1624px">㏑</span>
<span class="t stl" style="left:2450px;top:1624px">:</span>
<span class="t stl" style="left:2478px;top:1624px">92</span>
<i class="b sto" style="left:2520px;top:1624px;width:238px"></i>
<span class="t stk sym" style="left:2534px;top:1624px">☲</span>
<span class="t stk" style="left:2562px;top:1624px">[133]trailing</span>
</div>
<div id="edge"></div>
</div>
</body></html>
